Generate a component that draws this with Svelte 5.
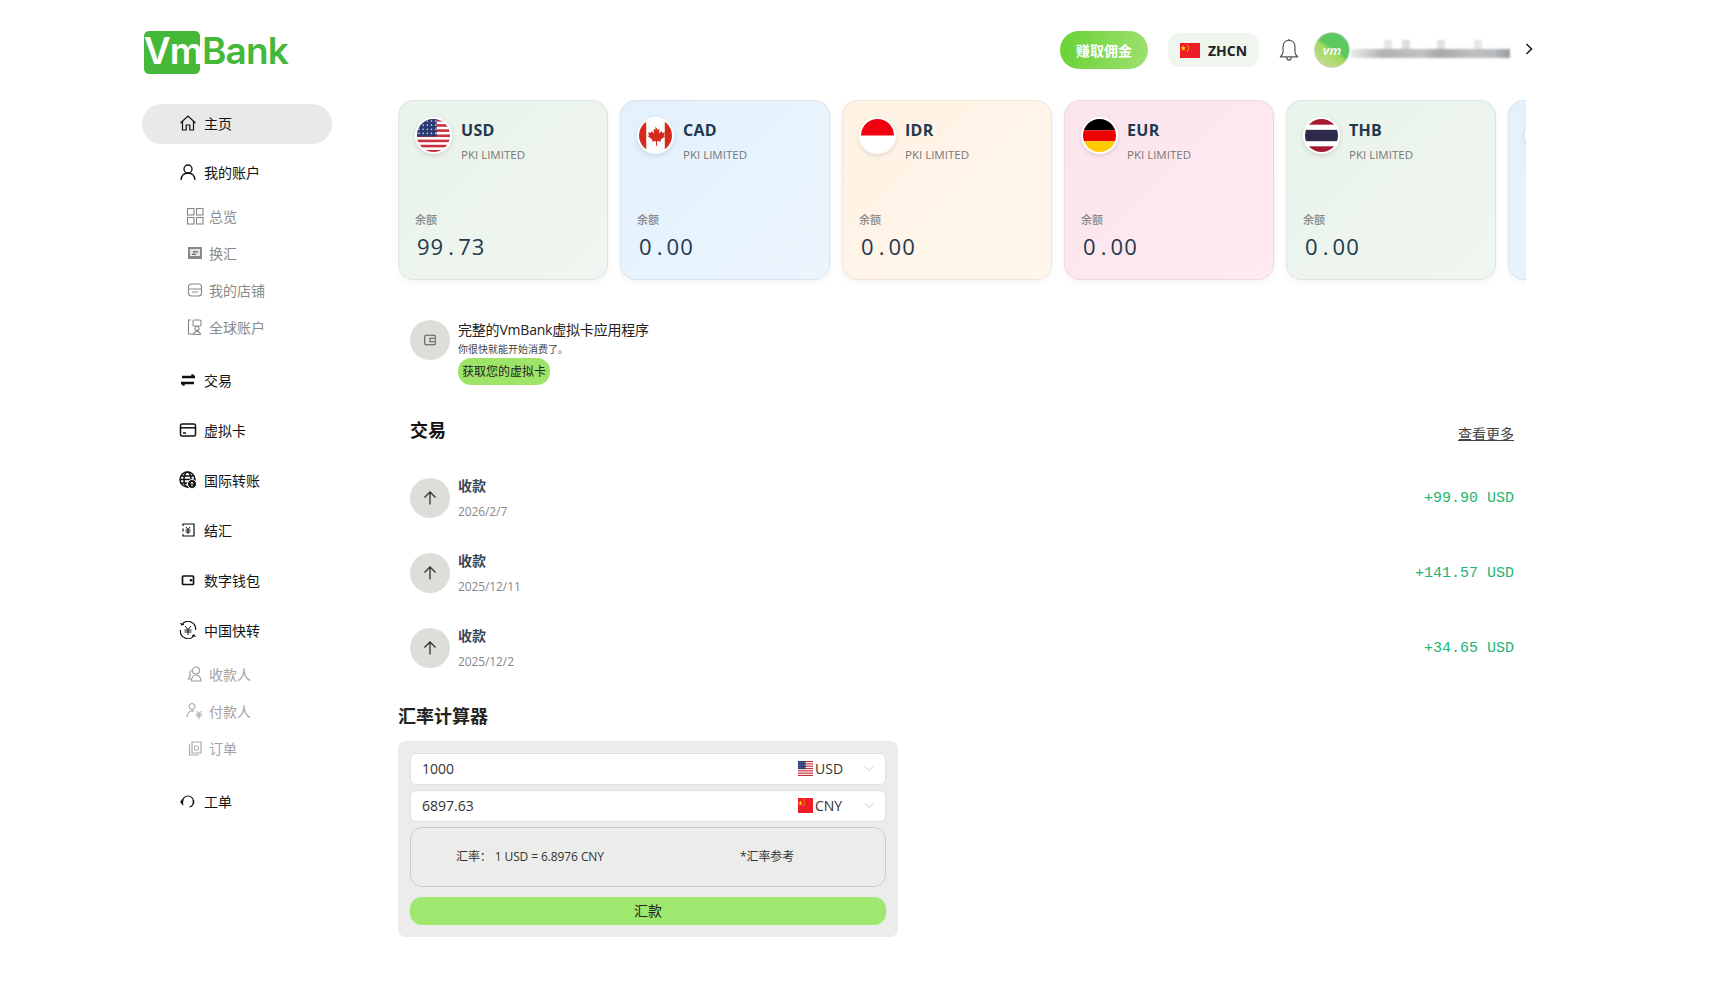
<script>
	const accounts = [
		{ code: 'USD', balance: ['99', '73'], tone: 'green' },
		{ code: 'CAD', balance: ['0', '00'], tone: 'blue' },
		{ code: 'IDR', balance: ['0', '00'], tone: 'orange' },
		{ code: 'EUR', balance: ['0', '00'], tone: 'pink' },
		{ code: 'THB', balance: ['0', '00'], tone: 'green' }
	];

	const transactions = [
		{ date: '2026/2/7', amount: '+99.90 USD' },
		{ date: '2025/12/11', amount: '+141.57 USD' },
		{ date: '2025/12/2', amount: '+34.65 USD' }
	];
</script>

{#snippet cnFlag()}
	<svg viewBox="0 0 30 20" width="100%" height="100%" preserveAspectRatio="none">
		<rect width="30" height="20" fill="#ee1c25" />
		<path d="M5 2.500l1 3 3 .1-2.400 1.800.9 3-2.500-1.800-2.500 1.800.9-3L1 5.600l3-.1z" fill="#ffdd00" />
		<circle cx="11" cy="2.500" r=".9" fill="#ffdd00" />
		<circle cx="13" cy="5" r=".9" fill="#ffdd00" />
		<circle cx="13" cy="8" r=".9" fill="#ffdd00" />
		<circle cx="11" cy="10.500" r=".9" fill="#ffdd00" />
	</svg>
{/snippet}

{#snippet usFlag()}
	<svg viewBox="0 0 26 26" width="100%" height="100%" preserveAspectRatio="none">
		<rect width="26" height="26" fill="#fff" />
		{#each [0, 4, 8, 12, 16, 20, 24] as y}
			<rect {y} width="26" height="2" fill="#c8313e" />
		{/each}
		<rect width="13" height="14" fill="#2b3a73" />
		{#each [2, 5, 8, 11] as y}
			{#each [2, 5, 8, 11] as x}
				<circle cx={x} cy={y} r=".6" fill="#c9cfe0" />
			{/each}
		{/each}
	</svg>
{/snippet}

{#snippet roundFlag(code)}
	<svg viewBox="0 0 32 32" width="100%" height="100%">
		{#if code === 'USD'}
			<rect width="32" height="32" fill="#fff" />
			{#each [0, 5, 10, 15, 20, 25, 30] as y}
				<rect {y} width="32" height="2.500" fill="#c8313e" />
			{/each}
			<rect width="19" height="17" fill="#2b3a73" />
			{#each [2, 6, 10, 14] as y}
				{#each [2, 6, 10, 14, 18] as x}
					<circle cx={x} cy={y} r=".8" fill="#c9cfe0" />
				{/each}
			{/each}
		{:else if code === 'CAD'}
			<rect width="32" height="32" fill="#fff" />
			<rect width="7" height="32" fill="#d52b1e" />
			<rect x="25" width="7" height="32" fill="#d52b1e" />
			<path d="M16 7l2 3.500 2-.8-.7 4.300 2.600-2.300.6 1.700 2.700-.4-.9 3 1 .7-4.300 3.500.5 1.700-4-.5V26h-1v-4.600l-4 .5.500-1.700-4.300-3.500 1-.7-.9-3 2.700.4.600-1.700 2.600 2.300-.7-4.300 2 .8z" fill="#d52b1e" />
		{:else if code === 'IDR'}
			<rect width="32" height="32" fill="#fff" />
			<rect width="32" height="16" fill="#f0000f" />
		{:else if code === 'EUR'}
			<rect width="32" height="11" fill="#000" />
			<rect y="11" width="32" height="10.500" fill="#f00000" />
			<rect y="21.500" width="32" height="10.500" fill="#ffcb00" />
		{:else if code === 'THB'}
			<rect width="32" height="32" fill="#fff" />
			<rect width="32" height="5.500" fill="#a51931" />
			<rect y="26.500" width="32" height="5.500" fill="#a51931" />
			<rect y="10.500" width="32" height="11" fill="#2d2a4a" />
		{:else}
			<rect width="32" height="32" fill="#d8e6f2" />
		{/if}
	</svg>
{/snippet}

<div class="page">
	<header>
		<div class="logo"><span class="vm">Vm</span><span class="bank">Bank</span></div>
		<div class="top-right">
			<button class="earn">赚取佣金</button>
			<div class="lang">
				<span class="lang-flag">{@render cnFlag()}</span>
				ZHCN
			</div>
			<svg class="bell" viewBox="0 0 24 26" fill="none" stroke="#555" stroke-width="1.300" stroke-linejoin="round">
				<path d="M12 2.500c-4 0-6.500 3-6.500 7v6c0 2-1.500 3.500-3 5h19c-1.500-1.500-3-3-3-5v-6c0-4-2.500-7-6.500-7z" />
				<path d="M12 1v1.500M9.500 21c0 1.800 1 3 2.500 3s2.500-1.200 2.500-3" />
			</svg>
			<div class="avatar">vm</div>
			<div class="name-blur"></div>
			<svg class="chevron" viewBox="0 0 10 14" fill="none" stroke="#222" stroke-width="1.600">
				<path d="M2.500 2l5 5-5 5" />
			</svg>
		</div>
	</header>

	<div class="body">
		<nav>
			<a class="item active">
				<svg viewBox="0 0 18 18" fill="none" stroke="#111" stroke-width="1.200"><path d="M1.500 9L9 2l7.500 7M3.500 7.500V16h3.700v-5h3.600v5h3.700V7.500" /></svg>
				主页
			</a>
			<a class="item">
				<svg viewBox="0 0 18 18" fill="none" stroke="#111" stroke-width="1.300"><circle cx="9" cy="6" r="4" /><path d="M2 17c.4-4 3-7 7-7s6.600 3 7 7" /></svg>
				我的账户
			</a>
			<div class="sub">
				<a class="sub-item">
					<svg viewBox="0 0 18 18" fill="none" stroke="#888" stroke-width="1.100"><rect x="1.500" y="1.500" width="6.500" height="6.500" /><rect x="10.500" y="1.500" width="6.500" height="6.500" /><rect x="1.500" y="10.500" width="6.500" height="6.500" /><rect x="10.500" y="10.500" width="6.500" height="6.500" /></svg>
					总览
				</a>
				<a class="sub-item">
					<svg viewBox="0 0 18 18"><rect x="2" y="3" width="14" height="12" fill="#888" /><rect x="4" y="5" width="10" height="7" fill="#e4e4e4" /><path d="M7 7h5v1.500H7zM6 9.500h4V11H6z" fill="#777" /></svg>
					换汇
				</a>
				<a class="sub-item">
					<svg viewBox="0 0 18 18" fill="none" stroke="#888" stroke-width="1.100"><rect x="2.500" y="3" width="13" height="12" rx="3" /><path d="M2.500 8h13M6 11h6" /></svg>
					我的店铺
				</a>
				<a class="sub-item">
					<svg viewBox="0 0 18 18" fill="none" stroke="#888" stroke-width="1.100"><path d="M5 2H2.500v14H8" /><rect x="7" y="2" width="8" height="6" rx="1" /><circle cx="11" cy="10.500" r="2" /><path d="M7.500 16.500c.3-2 1.700-3 3.500-3s3.200 1 3.500 3z" /></svg>
					全球账户
				</a>
			</div>
			<a class="item">
				<svg viewBox="0 0 18 18" fill="none" stroke="#111" stroke-width="2.400"><path d="M16 6H3M2 12h13" /><path d="M12.500 3.500L15 5.500M5.500 14.500L3 12.500" stroke-width="1.800" /></svg>
				交易
			</a>
			<a class="item">
				<svg viewBox="0 0 18 18" fill="none" stroke="#111" stroke-width="1.500"><rect x="1.500" y="3" width="15" height="12" rx="1.500" /><path d="M1.500 6.800h15" /><path d="M4 12h3" /></svg>
				虚拟卡
			</a>
			<a class="item">
				<svg viewBox="0 0 18 18" fill="none" stroke="#111" stroke-width="1.500"><circle cx="8.500" cy="8.500" r="7.500" /><ellipse cx="8.500" cy="8.500" rx="3.500" ry="7.500" /><path d="M1 8.500h15M2 5h13M2 12h13" /><circle cx="13" cy="13" r="4.500" fill="#111" stroke="#fff" stroke-width="1" /><path d="M13 15.500v-4M11.500 12.500l1.500-1.500 1.500 1.500" stroke="#fff" stroke-width=".9" /></svg>
				国际转账
			</a>
			<a class="item">
				<svg viewBox="0 0 18 18" fill="none" stroke="#111" stroke-width="1.200"><path d="M4 5V3h11v12H4v-2M4 7.500v3" /><path d="M7 6l2 2.500L11 6M6.500 9h5M6.500 11h5M9 8.500V13" stroke-width="1" /></svg>
				结汇
			</a>
			<a class="item">
				<svg viewBox="0 0 18 18" fill="none" stroke="#111" stroke-width="1.700"><rect x="3.500" y="5" width="11" height="8.500" rx=".8" /><circle cx="12" cy="9.200" r="1.300" fill="#111" stroke="none" /></svg>
				数字钱包
			</a>
			<a class="item">
				<svg viewBox="0 0 18 18" fill="none" stroke="#111" stroke-width="1.200"><path d="M3 3.500A7.500 7.500 0 0 1 16.500 9M15 14.500A7.500 7.500 0 0 1 1.500 9" /><path d="M1.500 2l1.500 2 2-1M16.500 16l-1.500-2-2 1" /><path d="M6 5l3 3.500L12 5M5.500 9h7M5.500 11h7M9 8.500V14" stroke-width="1" /></svg>
				中国快转
			</a>
			<div class="sub muted">
				<a class="sub-item">
					<svg viewBox="0 0 18 18" fill="none" stroke="#999" stroke-width="1.100"><circle cx="10" cy="5.500" r="3.500" /><path d="M5.500 16c0-3.500 2-6 4.500-6s5 2.500 5 6zM6.500 5A3 3 0 0 0 4.500 10L2.500 14h3" /></svg>
					收款人
				</a>
				<a class="sub-item">
					<svg viewBox="0 0 18 18" fill="none" stroke="#999" stroke-width="1"><circle cx="6" cy="4.500" r="3" /><path d="M1 15c.3-3.500 2-6 5-6h2" /><path d="M10.500 9l2.500 2.500L15.500 9M10 12h6M10 14h6M13 11.500V17" stroke-width=".9" /></svg>
					付款人
				</a>
				<a class="sub-item">
					<svg viewBox="0 0 18 18" fill="none" stroke="#aaa" stroke-width="1.200"><path d="M6 3h9v11H6z" /><path d="M3.500 5.500V16H13" /><path d="M8.500 7h3l1 1v3h-4z" stroke-width="1" /></svg>
					订单
				</a>
			</div>
			<a class="item">
				<svg viewBox="0 0 18 18" fill="none" stroke="#111" stroke-width="1.200"><path d="M3.500 9.500a5.500 5.500 0 0 1 11 0c0 3-1.500 5-4 5.500" /><path d="M3.500 8L2 10l1.500 2zM14.500 8v4" stroke-width="1.400" /></svg>
				工单
			</a>
		</nav>

		<main>
			<section class="cards">
				{#each accounts as acct}
					<article class="card {acct.tone}">
						<div class="card-top">
							<span class="round-flag">{@render roundFlag(acct.code)}</span>
							<div>
								<div class="code">{acct.code}</div>
								<div class="holder">PKI LIMITED</div>
							</div>
						</div>
						<div class="label">余额</div>
						<div class="balance">{acct.balance[0]}<span class="pt">.</span>{acct.balance[1]}</div>
					</article>
				{/each}
				<article class="card blue">
					<div class="card-top"><span class="round-flag">{@render roundFlag('')}</span></div>
				</article>
			</section>

			<section class="promo">
				<span class="circle">
					<svg viewBox="0 0 16 16" width="14" height="14" fill="none" stroke="#555" stroke-width="1.200"><rect x="2" y="2.500" width="12" height="11" rx="1.500" /><path d="M13 6H8v4h5" /></svg>
				</span>
				<div>
					<div class="promo-title">完整的VmBank虚拟卡应用程序</div>
					<div class="promo-sub">你很快就能开始消费了。</div>
					<button class="promo-btn">获取您的虚拟卡</button>
				</div>
			</section>

			<section class="tx">
				<div class="tx-head">
					<h3>交易</h3>
					<a class="more">查看更多</a>
				</div>
				{#each transactions as t}
					<div class="tx-row">
						<span class="circle">
							<svg viewBox="0 0 16 16" width="16" height="16" fill="none" stroke="#333" stroke-width="1.300"><path d="M8 14.500V2M2.500 7.500L8 2l5.500 5.500" /></svg>
						</span>
						<div class="tx-text">
							<div class="tx-title">收款</div>
							<div class="tx-date">{t.date}</div>
						</div>
						<div class="tx-amount">{t.amount}</div>
					</div>
				{/each}
			</section>

			<h3 class="calc-title">汇率计算器</h3>
			<section class="calc">
				<div class="field">
					<span class="value">1000</span>
					<span class="mini-flag">{@render usFlag()}</span>
					<span class="cur">USD</span>
					<svg class="caret" viewBox="0 0 12 8" fill="none" stroke="#bbb" stroke-width="1"><path d="M1 1.500l5 5 5-5" /></svg>
				</div>
				<div class="field">
					<span class="value">6897.63</span>
					<span class="mini-flag">{@render cnFlag()}</span>
					<span class="cur">CNY</span>
					<svg class="caret" viewBox="0 0 12 8" fill="none" stroke="#bbb" stroke-width="1"><path d="M1 1.500l5 5 5-5" /></svg>
				</div>
				<div class="rate">
					<span class="rate-value">汇率： 1 USD = 6.8976 CNY</span>
					<span>*汇率参考</span>
				</div>
				<button class="send">汇款</button>
			</section>
		</main>
	</div>
</div>

<style>
	:global(body) {
		background: #fff;
	}
	.page {
		width: 1396px;
		margin-left: 142px;
		height: 1006px;
		overflow: hidden;
		font-family: 'Open Sans', 'Noto Sans CJK SC', sans-serif;
		color: #111;
	}
	button {
		font-family: inherit;
		border: none;
		padding: 0;
		cursor: pointer;
	}

	/* top bar */
	header {
		height: 100px;
		box-sizing: border-box;
		padding: 30px 0 0 2px;
		display: flex;
		justify-content: space-between;
		align-items: flex-start;
	}
	.logo {
		display: flex;
		align-items: center;
		height: 44px;
		font-family: Inter, sans-serif;
		font-weight: 600;
		font-size: 37px;
		line-height: 42px;
		letter-spacing: -0.8px;
	}
	.vm {
		width: 56px;
		height: 43px;
		background: #45b83a;
		color: #fff;
		border-radius: 5px;
		display: flex;
		align-items: center;
		justify-content: center;
		box-sizing: border-box;
		padding: 0 0 2px 2px;
	}
	.bank {
		color: #45b83a;
		margin: -2px 0 0 2px;
	}
	.top-right {
		display: flex;
		align-items: center;
		height: 40px;
		padding-right: 4px;
	}
	.earn {
		width: 88px;
		height: 38px;
		border-radius: 19px;
		background: linear-gradient(100deg, #68d235, #9fe070);
		color: #fff;
		font-size: 14px;
		font-weight: 700;
	}
	.lang {
		margin-left: 20px;
		width: 91px;
		height: 34px;
		border-radius: 12px;
		background: #eef6ee;
		display: flex;
		align-items: center;
		box-sizing: border-box;
		padding-left: 12px;
		gap: 8px;
		font-size: 14px;
		font-weight: 700;
		color: #222;
	}
	.lang-flag {
		width: 20px;
		height: 15px;
		display: block;
	}
	.bell {
		width: 22px;
		height: 26px;
		margin-left: 19px;
	}
	.avatar {
		width: 36px;
		height: 36px;
		margin-left: 14px;
		border-radius: 50%;
		box-sizing: border-box;
		border: 1px solid #cfd4cb;
		background: linear-gradient(215deg, #5cc860 45%, #a6dc5c 55%, #c7d9a6);
		color: #f1f7ea;
		font-style: italic;
		font-weight: 700;
		font-size: 13px;
		display: flex;
		align-items: center;
		justify-content: center;
	}
	/* the account name is pixelated out in the screenshot */
	.name-blur {
		width: 159px;
		height: 18px;
		margin: 0 0 3px 1px;
		filter: blur(1px);
		background:
			linear-gradient(90deg, #e4ece6 0, #d8d6d4 8%, #b4b2b0 20%, #c4c2c0 45%, #aaa8a8 55%, #c0bebc 75%, #b8bcc0 90%, #9a9a9a 100%) 0 100% / 100% 9px no-repeat,
			linear-gradient(#e6e6e6, #e6e6e6) 33px 0 / 8px 10px no-repeat,
			linear-gradient(#dcdcdc, #dcdcdc) 51px 0 / 8px 10px no-repeat,
			linear-gradient(#e0e0e0, #e0e0e0) 86px 0 / 8px 10px no-repeat,
			linear-gradient(#e4e6e8, #e4e6e8) 123px 0 / 8px 10px no-repeat;
	}
	.chevron {
		width: 10px;
		height: 14px;
		margin: 0 0 2px 14px;
	}

	/* layout */
	.body {
		display: flex;
		align-items: flex-start;
	}
	nav {
		width: 190px;
		margin-top: 4px;
		margin-right: 66px;
		flex: none;
		display: flex;
		flex-direction: column;
	}
	.item {
		height: 40px;
		box-sizing: border-box;
		margin-bottom: 10px;
		padding: 0 0 2px 37px;
		display: flex;
		align-items: center;
		gap: 7px;
		font-size: 14px;
		color: #111;
	}
	.item svg {
		width: 18px;
		height: 18px;
		flex: none;
	}
	.item.active {
		background: #e9e9e9;
		border-radius: 20px;
		margin-bottom: 9px;
	}
	.sub {
		margin: -4.500px 0 14.500px;
	}
	.sub-item {
		height: 37px;
		box-sizing: border-box;
		padding: 0 0 2px 44px;
		display: flex;
		align-items: center;
		gap: 5px;
		font-size: 14px;
		color: #8a8a8a;
	}
	.sub.muted .sub-item {
		color: #a3a3a3;
	}
	.sub-item svg {
		width: 18px;
		height: 18px;
		flex: none;
	}

	main {
		width: 1128px;
		flex: none;
	}

	/* account cards */
	.cards {
		display: flex;
		gap: 12px;
		overflow: hidden;
		padding-bottom: 8px;
	}
	.card {
		flex: 0 0 210px;
		height: 180px;
		box-sizing: border-box;
		border: 1px solid rgba(0, 0, 0, 0.06);
		border-radius: 16px;
		box-shadow: 0 2px 6px rgba(0, 0, 0, 0.05);
		padding: 16px 16px 0;
	}
	.card.green {
		background: linear-gradient(135deg, #e8f3ea, #f0f6f1);
	}
	.card.blue {
		background: linear-gradient(135deg, #e3f1fc, #ebf5fe);
	}
	.card.orange {
		background: linear-gradient(135deg, #fff2e3, #fff6ec);
	}
	.card.pink {
		background: linear-gradient(135deg, #fce5ed, #feeaf0);
	}
	.card-top {
		display: flex;
		gap: 9px;
		height: 95px;
	}
	.round-flag {
		display: block;
		width: 33px;
		height: 33px;
		flex: none;
		border: 2px solid #fff;
		border-radius: 50%;
		overflow: hidden;
		box-shadow: 0 2px 5px rgba(0, 0, 0, 0.12);
	}
	.code {
		font-size: 16px;
		font-weight: 700;
		line-height: 22px;
		margin-top: 2px;
		letter-spacing: 0.3px;
		color: #22384f;
	}
	.holder {
		font-size: 11.500px;
		line-height: 16px;
		margin-top: 6px;
		color: #777;
	}
	.label {
		font-size: 11px;
		font-weight: 500;
		line-height: 16px;
		color: #888;
	}
	.balance {
		font-size: 22px;
		font-weight: 500;
		line-height: 30px;
		margin: 3px 0 0 2px;
		letter-spacing: 1px;
		color: #22384f;
	}
	.pt {
		display: inline-block;
		width: 14px;
		text-align: center;
		letter-spacing: 0;
	}

	/* promo */
	.promo {
		display: flex;
		gap: 8px;
		margin: 32px 0 0 12px;
	}
	.circle {
		width: 40px;
		height: 40px;
		border-radius: 50%;
		background: #dcdfd9;
		display: flex;
		align-items: center;
		justify-content: center;
		flex: none;
	}
	.promo-title {
		font-size: 14px;
		line-height: 20px;
		letter-spacing: -0.2px;
		color: #222;
	}
	.promo-sub {
		font-size: 10px;
		line-height: 14px;
		margin-top: 2px;
		color: #444;
	}
	.promo-btn {
		display: block;
		margin-top: 2px;
		width: 92px;
		height: 27px;
		border-radius: 13px;
		background: #9de468;
		font-size: 12px;
		padding-bottom: 1px;
		color: #222;
	}

	/* transactions */
	.tx {
		margin: 32px 12px 0;
	}
	.tx-head {
		display: flex;
		justify-content: space-between;
		align-items: center;
		height: 32px;
		margin-bottom: 29px;
	}
	h3 {
		margin: 0;
		font-size: 18px;
		font-weight: 700;
		color: #111;
	}
	.tx-head h3 {
		margin-top: -9px;
	}
	.more {
		font-size: 14px;
		color: #444;
		text-decoration: underline;
	}
	.tx-row {
		display: flex;
		align-items: center;
		gap: 8px;
		height: 40px;
		margin-bottom: 35px;
	}
	.tx-text {
		flex: 1;
		margin-top: -1px;
	}
	.tx-title {
		font-size: 14px;
		font-weight: 700;
		line-height: 20px;
		color: #3a4756;
	}
	.tx-date {
		font-size: 12px;
		line-height: 16px;
		margin-top: 8px;
		letter-spacing: -0.1px;
		color: #888;
	}
	.tx-amount {
		font-family: 'Liberation Mono', monospace;
		font-size: 15px;
		color: #22b573;
	}

	/* calculator */
	.calc-title {
		margin-top: 0;
		line-height: 26px;
		margin-bottom: 12px;
		color: #222;
	}
	.calc {
		width: 500px;
		height: 196px;
		box-sizing: border-box;
		background: #ecedea;
		border-radius: 8px;
		padding: 12px;
		display: flex;
		flex-direction: column;
	}
	.field {
		height: 32px;
		box-sizing: border-box;
		background: #fff;
		border: 1px solid #e0e0e0;
		border-radius: 6px;
		margin-bottom: 5px;
		padding: 0 11px 2px;
		display: flex;
		align-items: center;
		font-size: 14px;
		color: #333;
	}
	.value {
		flex: 1;
	}
	.mini-flag {
		width: 15px;
		height: 15px;
		display: block;
	}
	.cur {
		width: 49px;
		margin-left: 2px;
	}
	.caret {
		width: 10px;
		height: 7px;
	}
	.rate {
		height: 60px;
		box-sizing: border-box;
		border: 1px solid #c9cbc7;
		border-radius: 12px;
		padding: 0 0 2px 45px;
		display: flex;
		align-items: center;
		font-size: 12px;
		letter-spacing: -0.1px;
		color: #333;
	}
	.rate-value {
		width: 284px;
	}
	.send {
		margin-top: 10px;
		height: 28px;
		border-radius: 12px;
		background: #9fe870;
		font-size: 14px;
		padding-bottom: 2px;
		color: #222;
	}
</style>
